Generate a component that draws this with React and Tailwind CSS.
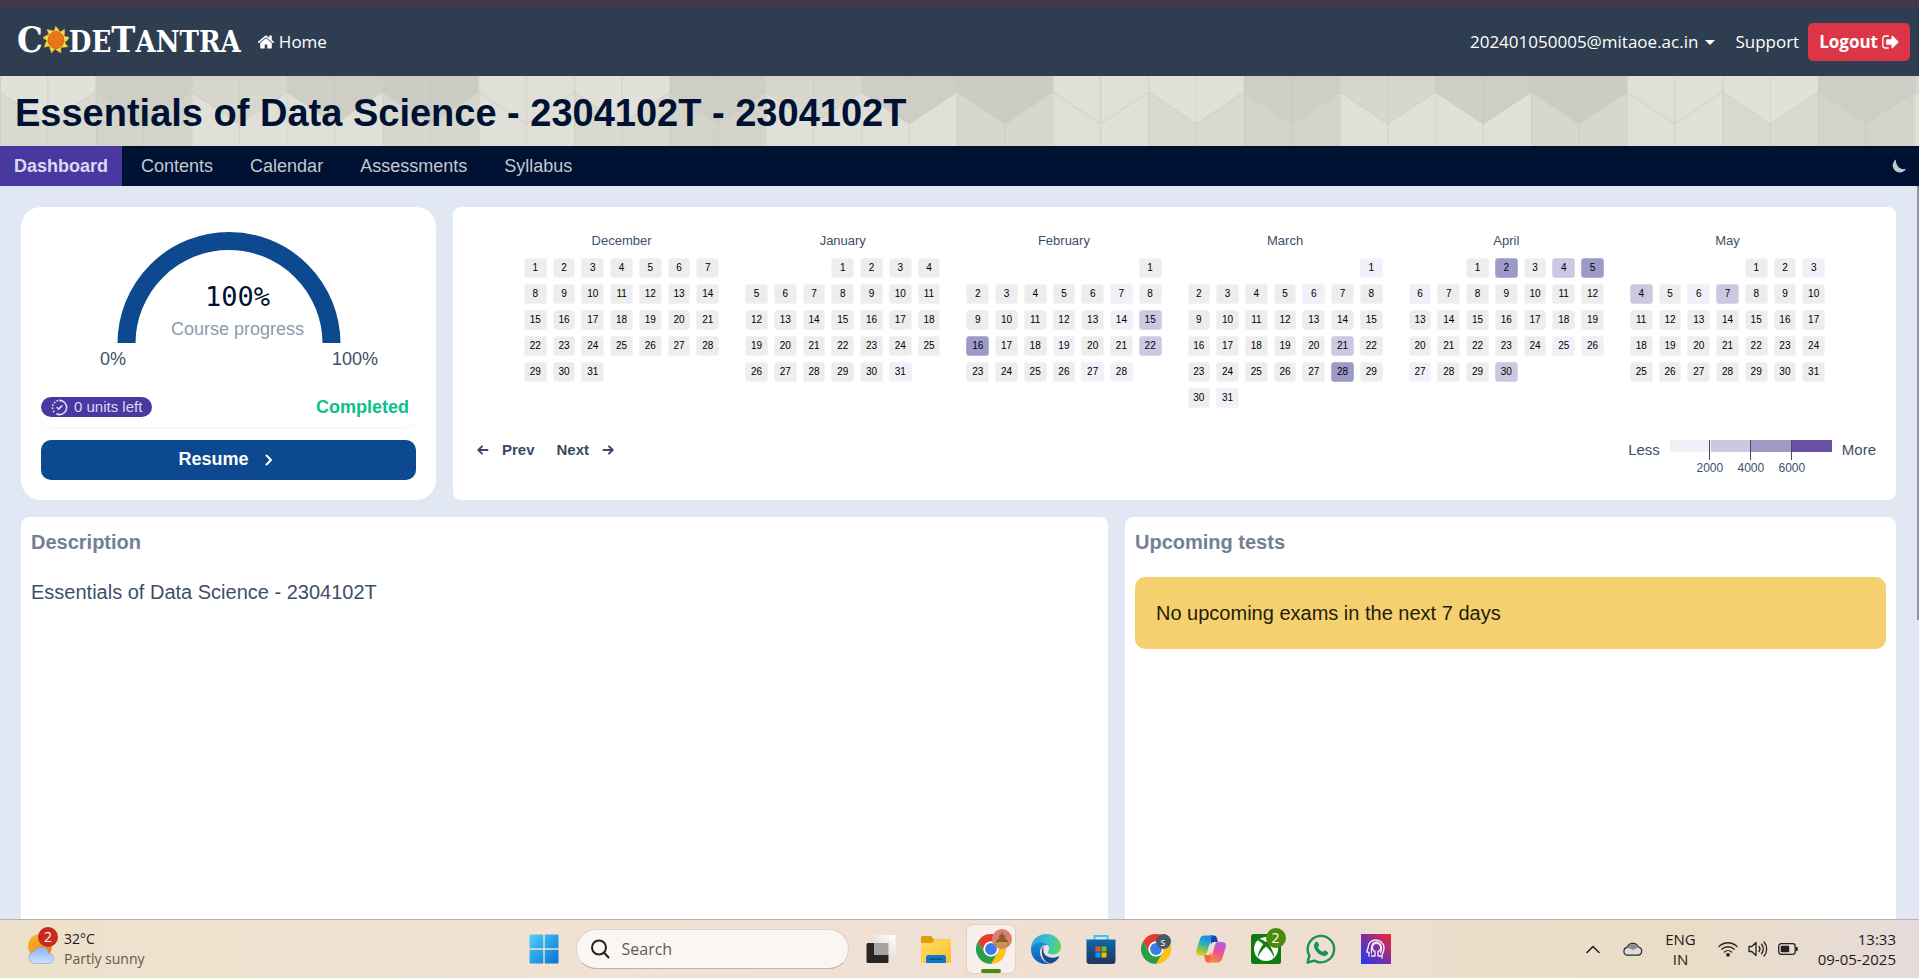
import React from "react";

const SANS = "font-['Liberation_Sans',sans-serif]";
const UI = "font-['Open_Sans',sans-serif]";

/* ---------- icons ---------- */

function HomeIcon() {
  return (
    <svg viewBox="0 0 1792 1792" className="size-[18px] fill-white" aria-hidden="true">
      <path d="M1472 992v480q0 26-19 45t-45 19h-384v-384H768v384H384q-26 0-45-19t-19-45V992q0-1 .5-3t.5-3l575-474 575 474q1 2 1 6zm223-69l-62 74q-8 9-21 11h-3q-13 0-21-7L896 424l-692 577q-12 8-24 7-13-2-21-11l-62-74q-8-10-7-23.5t11-21.5l719-599q32-26 76-26t76 26l244 204V288q0-14 9-23t23-9h192q14 0 23 9t9 23v408l219 182q10 8 11 21.5t-7 23.5z" />
    </svg>
  );
}

function LogoutIcon() {
  return (
    <svg viewBox="0 128 1600 1536" className="h-4 w-[17px] fill-white" aria-hidden="true">
      <path d="M640 1440q0 4 1 20t.5 26.5-3 23.5-10 19.5-20.5 6.500H288q-119 0-203.500-84.500T0 1248V544q0-119 84.500-203.500T288 256h320q13 0 22.500 9.500T640 288q0 4 1 20t.5 26.500-3 23.500-10 19.500T608 384H288q-66 0-113 47t-47 113v704q0 66 47 113t113 47h312l11.500 1 11.500 3 8 5.500 7 9 2 13.500zm928-544q0 26-19 45l-544 544q-19 19-45 19t-45-19-19-45v-288H448q-26 0-45-19t-19-45V704q0-26 19-45t45-19h448V352q0-26 19-45t45-19 45 19l544 544q19 19 19 45z" />
    </svg>
  );
}

function SunIcon() {
  const rays = Array.from({ length: 9 }, (_, i) => i * 40);
  return (
    <svg viewBox="0 0 26 28" className="h-7 w-[26px]" aria-hidden="true">
      {rays.map((a) => (
        <path key={a} d="M8.500 7Q12 5 12.500 0 Q16 3 17.500 7z" fill="#f3dc4c" stroke="#b98f1f" strokeWidth=".4" transform={`rotate(${a} 13 14)`} />
      ))}
      <ellipse cx="13" cy="14" rx="8.600" ry="9" fill="#f0d53f" />
      <ellipse cx="13" cy="14" rx="7.800" ry="8.600" fill="#e87817" stroke="#c9610f" strokeWidth=".8" />
    </svg>
  );
}

function UnitsIcon() {
  return (
    <svg viewBox="0 0 24 24" className="size-[19px]" fill="none" stroke="currentColor" strokeWidth="2" strokeLinecap="round" strokeLinejoin="round" aria-hidden="true">
      <path d="M9 12l2 2 4-4" />
      <path d="M12 3a9 9 0 0 1 0 18" />
      <path d="M8.560 20.310a9 9 0 0 0 3.440 .69" />
      <path d="M4.600 17.140v.01M3.100 13v.01M3.600 9v.01M5.800 5.600v.01M9 3.600v.01" strokeWidth="2.400" />
    </svg>
  );
}

function Arrow({ flip }) {
  return (
    <svg viewBox="0 0 12 12" className={flip ? "size-3 rotate-180" : "size-3"} fill="none" stroke="currentColor" strokeWidth="1.900" strokeLinecap="round" strokeLinejoin="round" aria-hidden="true">
      <path d="M1.500 6h9M7 2.300l3.700 3.700L7 9.700" />
    </svg>
  );
}

/* ---------- banner ---------- */

const COLS = [
  ["#e1e0d9", "#d9d9d0"],
  ["#cfcec6", "#d4d3ca"],
  ["#d8d7ce", "#e1e0d8"],
  ["#cfcec6", "#e1e0d8"],
  ["#cdccc4", "#d7d7cd"],
  ["#e0dfd8", "#e0dfd8"],
];

function BannerPattern() {
  return (
    <svg className="absolute inset-0 size-full" aria-hidden="true">
      <defs>
        <pattern id="folds" width="574.2" height="70" patternUnits="userSpaceOnUse">
          {COLS.map(([top, bottom], i) => (
            <g key={i} transform={`translate(${i * 95.7} 0)`}>
              <path d="M0 0H96V70H0z" fill={bottom} />
              <path d="M0 0H96V16L47.850 48 0 16z" fill={top} />
              <path d="M0 16L47.850 48 95.700 16" fill="none" stroke="#c9c8be" strokeOpacity=".6" />
              <path d="M.5 0V70M47.850 0V70" stroke="#c2c1b8" strokeOpacity=".5" />
            </g>
          ))}
        </pattern>
      </defs>
      <rect width="100%" height="100%" fill="url(#folds)" />
    </svg>
  );
}

/* ---------- heat map ---------- */

const LEVELS = {
  0: "border-[#f3f3f3] bg-[#ededed]",
  1: "border-[#f4f3f9] bg-[#f1eff7]",
  2: "border-[#d8d6e9] bg-[#cbc8e1]",
  3: "border-[#b3b0d4] bg-[#9e9ac8]",
};

const MONTHS = [
  { name: "December", start: 0, days: 31, marks: {} },
  { name: "January", start: 3, days: 31, marks: { 31: 1 } },
  { name: "February", start: 6, days: 28, marks: { 7: 1, 14: 1, 15: 2, 16: 3, 19: 1, 22: 2, 27: 1, 28: 1 } },
  { name: "March", start: 6, days: 31, marks: { 1: 1, 6: 1, 21: 2, 28: 3, 31: 1 } },
  { name: "April", start: 2, days: 30, marks: { 2: 3, 4: 2, 5: 3, 6: 1, 25: 1, 26: 1, 27: 1, 30: 2 } },
  { name: "May", start: 4, days: 31, marks: { 3: 1, 4: 2, 6: 1, 7: 2 } },
];

function Month({ name, start, days, marks }) {
  return (
    <section className="flex-1">
      <h3 className="text-center text-[13px] leading-5 text-[#3d4f68]">{name}</h3>
      <div className="mt-[7px] grid grid-cols-7 gap-[6px]">
        {Array.from({ length: start }, (_, i) => (
          <span key={`blank${i}`} />
        ))}
        {Array.from({ length: days }, (_, i) => (
          <span key={i} className={`flex h-5 items-center justify-center rounded-[3px] border text-[10px] leading-none text-black ${LEVELS[marks[i + 1] || 0]}`}>
            {i + 1}
          </span>
        ))}
      </div>
    </section>
  );
}

function Legend() {
  return (
    <div className="flex gap-[10px] text-[15px] leading-5 text-[#3d4f68]">
      <span>Less</span>
      <div>
        <div className="flex h-5 items-start">
          <span className="h-3 w-[41px] bg-[#f1eff7]" />
          <span className="h-3 w-10 bg-[#cbc8e1]" />
          <span className="h-3 w-[41px] bg-[#9e9ac8]" />
          <span className="h-3 w-10 bg-[#6a51a3]" />
        </div>
        <div className="-mt-5 flex justify-center text-xs leading-4">
          {["2000", "4000", "6000"].map((v) => (
            <span key={v} className="flex w-[41px] flex-col items-center">
              <span className="h-5 w-px bg-[#3d4f68]" />
              {v}
            </span>
          ))}
        </div>
      </div>
      <span>More</span>
    </div>
  );
}

/* ---------- cards ---------- */

function ProgressCard() {
  return (
    <section className="w-[415px] shrink-0 rounded-[20px] bg-white p-5 text-[18px]">
      <div className="flex h-[200px] flex-col rounded-[10px] pt-[5px] shadow-[0_1px_2px_rgba(0,0,0,0.05)]">
        <div className="relative">
          <svg viewBox="0 0 224 111" className="mx-auto h-[111px] w-56" aria-hidden="true">
            <path d="M9.500 111.500a102.500 102.500 0 0 1 205 0" fill="none" stroke="#0c498e" strokeWidth="18" />
          </svg>
          <div className="absolute inset-x-0 bottom-0 flex flex-col items-center pl-[18px]">
            <strong className="font-['DejaVu_Sans_Mono',monospace] text-[27px] leading-9 font-normal text-[#001233]">100%</strong>
            <span className="leading-7 text-[#8e9aac]">Course progress</span>
          </div>
        </div>
        <div className="flex justify-between pt-px pr-[38px] pl-[59px] leading-[30px] text-[#3d4f68]">
          <span>0%</span>
          <span>100%</span>
        </div>
        <div className="mt-auto mb-2 flex items-center justify-between pr-[7px]">
          <span className="flex h-5 items-center gap-[5px] rounded-full bg-[#4838a0] pr-[10px] pl-[9px] text-[15px] leading-5 text-[#dcd8f1]">
            <UnitsIcon />0 units left
          </span>
          <strong className="leading-6 text-[#0cc08a]">Completed</strong>
        </div>
      </div>
      <button className="mt-[13px] flex h-10 w-full items-center justify-center gap-4 rounded-[10px] bg-[#0c498e] pr-[6px] pb-[2px] font-bold text-white">
        Resume
        <svg viewBox="0 0 8 12" className="mt-[2px] h-3 w-2" fill="none" stroke="currentColor" strokeWidth="2" strokeLinecap="round" strokeLinejoin="round" aria-hidden="true">
          <path d="M1.500 1.500L6 6l-4.500 4.500" />
        </svg>
      </button>
    </section>
  );
}

function ActivityCard() {
  return (
    <section className="flex min-w-0 flex-1 flex-col rounded-lg bg-white pt-6 pb-6">
      <div className="flex gap-[26px] px-[71px]">
        {MONTHS.map((m) => (
          <Month key={m.name} {...m} />
        ))}
      </div>
      <div className="mt-auto flex items-start justify-between pr-5 pl-6">
        <div className="flex gap-[22px] text-[15px] leading-5 font-bold text-[#384a63]">
          <button className="flex items-center gap-[13px]"><Arrow flip />Prev</button>
          <button className="flex items-center gap-[13px]">Next<Arrow /></button>
        </div>
        <Legend />
      </div>
    </section>
  );
}

/* ---------- taskbar ---------- */

function Chrome() {
  return (
    <svg viewBox="0 0 48 48" className="size-[30px]" aria-hidden="true">
      <path d="M24 24L44.800 12A24 24 0 0 1 24 48z" fill="#fcc31e" />
      <path d="M24 12H44.800L34.400 30z" fill="#fcc31e" />
      <path d="M34.400 30L24 48 13.600 30z" fill="#fcc31e" />
      <path d="M3.200 12A24 24 0 0 1 44.800 12H24A12 12 0 0 0 13.600 30z" fill="#e33b2e" />
      <path d="M3.200 12L13.600 30A12 12 0 0 0 34.400 30L24 48A24 24 0 0 1 3.200 12z" fill="#2a9f48" />
      <circle cx="24" cy="24" r="12" fill="#fff" />
      <circle cx="24" cy="24" r="9.500" fill="#3a7cec" />
    </svg>
  );
}

function Windows() {
  return (
    <svg viewBox="0 0 30 30" className="size-[30px]" aria-hidden="true">
      <defs>
        <linearGradient id="win" x1="0" y1="0" x2="1" y2="1">
          <stop offset="0" stopColor="#4fd0fb" />
          <stop offset="1" stopColor="#0573d3" />
        </linearGradient>
      </defs>
      <path d="M1.500 .5H14.300V14.300H.5V1.500a1 1 0 0 1 1-1zM15.700 .5H28.500a1 1 0 0 1 1 1V14.300H15.700zM.5 15.700H14.300V29.500H1.500a1 1 0 0 1-1-1zM15.700 15.700H29.500V28.500a1 1 0 0 1-1 1H15.700z" fill="url(#win)" />
    </svg>
  );
}

function TaskView() {
  return (
    <svg viewBox="0 0 30 30" className="size-[30px]" aria-hidden="true">
      <defs>
        <linearGradient id="tv" x1="1" y1="0" x2="0" y2="1">
          <stop offset="0" stopColor="#fff" />
          <stop offset="1" stopColor="#d6d6d6" />
        </linearGradient>
      </defs>
      <rect x=".5" y="9" width="22" height="20" rx="1.500" fill="#262626" />
      <rect x="8" y="1" width="21.500" height="20" rx="1" fill="url(#tv)" />
      <path d="M8 9H22.500V21H9a1 1 0 0 1-1-1z" fill="#a5a4a2" />
    </svg>
  );
}

function Folder() {
  return (
    <svg viewBox="0 0 30 30" className="size-[30px]" aria-hidden="true">
      <defs>
        <linearGradient id="fo" x1="0" y1="0" x2="1" y2="1">
          <stop offset="0" stopColor="#ffdc66" />
          <stop offset="1" stopColor="#fbbf26" />
        </linearGradient>
      </defs>
      <path d="M0 3.500A1.500 1.500 0 0 1 1.500 2H10l3 3.500H28.500a1 1 0 0 1 1 1V12H0z" fill="#df9c0b" />
      <path d="M0 9H11l3-3.500H28.500A1.500 1.500 0 0 1 30 7V27.500A1.500 1.500 0 0 1 28.500 29H1.500A1.500 1.500 0 0 1 0 27.500z" fill="url(#fo)" />
      <path d="M5 29V23.500A2.500 2.500 0 0 1 7.500 21H22.500A2.500 2.500 0 0 1 25 23.500V29z" fill="#0d78c9" />
      <path d="M9 25.200H21" stroke="#054a86" strokeWidth="1.400" strokeLinecap="round" />
    </svg>
  );
}

function Edge() {
  return (
    <svg viewBox="0 0 30 30" className="size-[30px]" aria-hidden="true">
      <defs>
        <linearGradient id="ed1" x1="0" y1=".3" x2="1" y2=".4">
          <stop offset="0" stopColor="#2aa5e6" />
          <stop offset=".6" stopColor="#35c4cd" />
          <stop offset="1" stopColor="#60d957" />
        </linearGradient>
        <linearGradient id="ed2" x1="0" y1="0" x2="0" y2="1">
          <stop offset="0" stopColor="#1b8fdc" />
          <stop offset="1" stopColor="#0d5ba8" />
        </linearGradient>
      </defs>
      <path d="M.2 13C1 5.500 7.500 0 15 0c9 0 15 6.500 15 12.500 0 5-3.800 8-8 8-3.500 0-5.200-1.200-5.200-2.200 0-.9 1.400-1.400 1.400-3.800C18.200 11 14.500 8 9.500 8 5 8 1.500 10 .2 13z" fill="url(#ed1)" />
      <path d="M.2 13C1.500 10 5 8 9.500 8c3.500 0 6 1.500 7.500 3.300-3.500-1.300-8 1.700-8 6.700 0 6 4.500 11 9.500 11.500C9 32-1.500 24.500.2 13z" fill="url(#ed2)" />
      <path d="M12.500 12.500C9.500 15 9.800 26.500 18.500 29.500c4 0 8-3.500 9.500-6.300.3-.8-.3-1-.9-.7-6 3-13.500.5-14.600-4.700-.4-2 0-3.800 0-5.300z" fill="#124c8f" />
    </svg>
  );
}

function Store() {
  return (
    <svg viewBox="0 0 30 30" className="size-[30px]" aria-hidden="true">
      <defs>
        <linearGradient id="st" x1="0" y1="0" x2="0" y2="1">
          <stop offset="0" stopColor="#0d67ae" />
          <stop offset="1" stopColor="#233457" />
        </linearGradient>
      </defs>
      <path d="M8.500 7V2H21.500V7" fill="none" stroke="#37c5f2" strokeWidth="2" />
      <path d="M.5 5.500H29.500V27a3 3 0 0 1-3 3H3.500a3 3 0 0 1-3-3z" fill="url(#st)" />
      <path d="M9.500 12.500h5v5h-5z" fill="#f25022" />
      <path d="M15.500 12.500h5v5h-5z" fill="#7fba00" />
      <path d="M9.500 18.500h5v5h-5z" fill="#00a4ef" />
      <path d="M15.500 18.500h5v5h-5z" fill="#ffb900" />
    </svg>
  );
}

function Copilot() {
  return (
    <svg viewBox="0 0 30 30" className="size-[30px]" aria-hidden="true">
      <defs>
        <linearGradient id="co1" x1=".5" y1="0" x2=".2" y2="1">
          <stop offset="0" stopColor="#1689e8" />
          <stop offset=".4" stopColor="#25b0c4" />
          <stop offset=".7" stopColor="#8cc641" />
          <stop offset="1" stopColor="#f2c51b" />
        </linearGradient>
        <linearGradient id="co2" x1=".7" y1="0" x2=".3" y2="1">
          <stop offset="0" stopColor="#b05bea" />
          <stop offset=".5" stopColor="#f0508f" />
          <stop offset="1" stopColor="#fb8a3c" />
        </linearGradient>
      </defs>
      <path d="M14 1.500h4c2 0 2.600 1.500 3.200 3.500L22 8h-4c-2 0-2.500 1-3.200 3z" fill="#1147b5" />
      <path d="M16 28.500h-4c-2 0-2.600-1.500-3.200-3.500L8 21h4c2 0 2.500-1 3.200-3z" fill="#f56a3c" />
      <path d="M8.500 1.500H18c-1.500 0-2.300 1.500-2.800 3L11 18.500c-.6 1.800-1.500 3-3.500 3H4c-3 0-4.500-2-3.700-5L4 4.700c.7-2 2.200-3.200 4.500-3.200z" fill="url(#co1)" />
      <path d="M21.500 28.500H12c1.500 0 2.300-1.500 2.800-3L19 11c.6-1.800 1.500-3 3.500-3H26c3 0 4.500 2 3.700 5L26 25.300c-.7 2-2.200 3.200-4.500 3.200z" fill="url(#co2)" />
    </svg>
  );
}

function Xbox() {
  return (
    <svg viewBox="0 0 30 30" className="size-[30px]" aria-hidden="true">
      <rect width="30" height="30" rx="2.500" fill="#107c10" />
      <circle cx="15" cy="15" r="12" fill="#fff" />
      <path d="M15 12.500C11 16 7.500 21 6.800 24c-.3-3.500 2.200-9.300 5.400-13.700C10.500 8.600 8.500 7 6.800 6.500L8 5c2.500 0 5 1.500 7 3.300C17 6.500 19.500 5 22 5l1.200 1.500c-1.700.5-3.700 2.100-5.400 3.800 3.200 4.400 5.700 10.200 5.400 13.700-.7-3-4.200-8-8.200-11.500z" fill="#107c10" />
    </svg>
  );
}

function WhatsApp() {
  return (
    <svg viewBox="0 0 30 30" className="size-[30px]" aria-hidden="true">
      <path d="M1.500 28.500L3.400 21.600A13.200 13.200 0 1 1 8.400 26.600z" fill="none" stroke="#1b8f5a" strokeWidth="2.400" strokeLinejoin="round" />
      <path d="M10.200 7.800c.7-.3 1.400-.2 1.700.5l1.100 2.600c.2.600-.1 1.100-1.200 2.400 1 2 2.700 3.700 5.100 4.800 1.200-1.500 1.500-1.800 2.200-1.500l2.600 1.300c.5.300.5.800.3 1.500-.5 1.700-2.300 2.700-4.100 2.500-5-.8-9.300-5-9.900-9.600-.2-1.800.8-3.700 2.200-4.500z" fill="#1b8f5a" />
    </svg>
  );
}

function HeadApp() {
  return (
    <svg viewBox="0 0 30 30" className="size-[30px]" aria-hidden="true">
      <defs>
        <linearGradient id="hd" x1="0" y1="1" x2="1" y2="0">
          <stop offset="0" stopColor="#1d3df5" />
          <stop offset=".5" stopColor="#7a2f9f" />
          <stop offset="1" stopColor="#fb2430" />
        </linearGradient>
      </defs>
      <rect width="30" height="30" fill="url(#hd)" />
      <g fill="none" stroke="#f2e6fa" strokeWidth="1.400" strokeLinecap="round" strokeLinejoin="round">
        <path d="M8 22V18.500L5.800 18 7 14C7 9 10.500 6 15 6s8 3.500 8 8c0 3-1 5-2 6.500V24" />
        <path d="M10.500 22H14V17.500A4.200 4.200 0 1 1 17 17.500V22H20.500" />
        <path d="M10.500 19V14a4.700 5.700 0 0 1 10 0c0 2-.3 3.200-1 4.500" />
      </g>
    </svg>
  );
}

function AppButton({ label, active, badge, children }) {
  return (
    <button aria-label={label} className={`relative flex size-12 items-center justify-center rounded-md ${active ? "bg-[#f7efea] shadow-[0_0_1px_1px_rgba(120,90,80,0.12)]" : ""}`}>
      {children}
      {badge}
      {active && <span className="absolute bottom-0 h-1 w-5 rounded-full bg-[#4b8a0a]" />}
    </button>
  );
}

function Taskbar() {
  return (
    <footer className={`grid h-[59px] shrink-0 grid-cols-[1fr_auto_1fr] items-center border-t border-[#b8b0aa] bg-[linear-gradient(90deg,#ede1cb,#f1e2d4_30%,#efdfd3_60%,#ebdcc6_88%,#e6dbda)] ${UI}`}>
      <div className="flex items-center gap-2 pl-7">
        <div className="relative">
          <svg viewBox="0 0 28 30" className="h-[30px] w-7" aria-hidden="true">
            <defs>
              <linearGradient id="sun" x1="0" y1="0" x2="1" y2="1">
                <stop offset="0" stopColor="#f6bd27" />
                <stop offset="1" stopColor="#f0711a" />
              </linearGradient>
              <linearGradient id="cloud" x1="0" y1="0" x2="0" y2="1">
                <stop offset="0" stopColor="#8db4f5" />
                <stop offset="1" stopColor="#cfe2ff" />
              </linearGradient>
            </defs>
            <circle cx="12" cy="12" r="12" fill="url(#sun)" />
            <path d="M7 29.500a6 6 0 0 1-.5-12A7.500 7.500 0 0 1 20.500 19 5.400 5.400 0 0 1 22 29.500z" fill="url(#cloud)" stroke="#7ba3e6" strokeWidth=".6" />
          </svg>
          <span className="absolute -top-[7px] -right-[2px] flex size-5 items-center justify-center rounded-full bg-[#c42b1c] text-sm leading-none text-white">2</span>
        </div>
        <div className="text-[14px] leading-5">
          <div className="text-[#1d1a18]">32°C</div>
          <div className="text-[#5f5952]">Partly sunny</div>
        </div>
      </div>
      <div className="flex items-center gap-[7px]">
        <AppButton label="Start"><Windows /></AppButton>
        <label className="mx-px flex h-10 w-[273px] items-center gap-3 rounded-full border border-[#dfd3cc] border-b-[#bcb2ac] bg-[#faf6f2] pl-[13px]">
          <svg viewBox="0 0 20 20" className="size-5 shrink-0" fill="none" stroke="#222" strokeWidth="2" strokeLinecap="round" aria-hidden="true">
            <circle cx="9" cy="8.500" r="7" />
            <path d="M14 13.500L18.500 18.500" />
          </svg>
          <input aria-label="Search" placeholder="Search" className="w-full min-w-0 bg-transparent text-base outline-none placeholder:text-[#5f5a57]" />
        </label>
        <AppButton label="Task view"><TaskView /></AppButton>
        <AppButton label="File Explorer"><Folder /></AppButton>
        <AppButton
          label="Chrome"
          active
          badge={
            <svg viewBox="0 0 20 20" className="absolute top-1 right-[3px] size-5" aria-hidden="true">
              <circle cx="10" cy="10" r="10" fill="#dd7d70" />
              <path d="M10 3l1 2.500 2.500 1.500-1 2 3 2.500 1 4.500H3.500l1-4.500 3-2.500-1-2L9 5.500z" fill="#8f5a2c" />
              <path d="M3 14.500C6 12.500 8 13 10 13s4-.5 7 1.500a9.500 9.500 0 0 1-14 0z" fill="#c39a4c" />
            </svg>
          }
        >
          <Chrome />
        </AppButton>
        <AppButton label="Edge"><Edge /></AppButton>
        <AppButton label="Microsoft Store"><Store /></AppButton>
        <AppButton label="Chrome, second profile" badge={<span className="absolute top-[9px] right-[9px] flex size-[15px] items-center justify-center rounded-full bg-[#455a64] text-[10px] leading-none text-white">s</span>}>
          <Chrome />
        </AppButton>
        <AppButton label="Copilot"><Copilot /></AppButton>
        <AppButton label="Xbox" badge={<span className="absolute top-[3px] right-1 flex size-5 items-center justify-center rounded-full bg-[#4b8a0a] text-sm leading-none text-white">2</span>}>
          <Xbox />
        </AppButton>
        <AppButton label="WhatsApp"><WhatsApp /></AppButton>
        <AppButton label="Assistant"><HeadApp /></AppButton>
      </div>
      <div className="flex items-center justify-end pr-[23px] text-[15px] leading-5 text-[#1d1a18]">
        <svg viewBox="0 0 14 9" className="h-[9px] w-[14px]" fill="none" stroke="#222" strokeWidth="1.600" strokeLinecap="round" strokeLinejoin="round" aria-hidden="true">
          <path d="M1 7.500L7 1.500l6 6" />
        </svg>
        <svg viewBox="0 0 20 14" className="ml-[23px] h-[14px] w-5" aria-hidden="true">
          <path d="M4.500 13.200a4 4 0 0 1-.4-7.900A6 6 0 0 1 15.300 5a4.200 4.200 0 0 1 .2 8.200z" fill="#dcdcdc" stroke="#2a2a2a" strokeWidth="1.200" />
          <path d="M4.500 5.500A5.700 5.700 0 0 1 15 5.500L10 8z" fill="#8d8d8d" />
        </svg>
        <div className="ml-[22px] text-center">ENG<br />IN</div>
        <svg viewBox="0 0 20 16" className="ml-[22px] h-4 w-5" fill="none" stroke="#222" strokeWidth="1.300" strokeLinecap="round" aria-hidden="true">
          <path d="M1 5.500a12.700 12.700 0 0 1 18 0M3.800 8.300a8.800 8.800 0 0 1 12.400 0M6.500 11a5 5 0 0 1 7 0" />
          <circle cx="10" cy="13.800" r="1.200" fill="#222" />
        </svg>
        <svg viewBox="0 0 20 18" className="ml-[10px] h-[18px] w-5" fill="none" stroke="#222" strokeWidth="1.300" strokeLinecap="round" strokeLinejoin="round" aria-hidden="true">
          <path d="M1 6.500h2.800L8 2.500v13L3.800 11.500H1z" />
          <path d="M11 6.500a4 4 0 0 1 0 5M13.500 4.300a7 7 0 0 1 0 9.400M16 2a10.500 10.500 0 0 1 0 14" />
        </svg>
        <svg viewBox="0 0 20 12" className="ml-[10px] h-3 w-5" aria-hidden="true">
          <rect x=".7" y=".7" width="16.500" height="10.600" rx="2.500" fill="none" stroke="#222" strokeWidth="1.300" />
          <rect x="2.700" y="2.700" width="8.500" height="6.600" rx="1" fill="#222" />
          <path d="M18 4h.8a1 1 0 0 1 1 1v2a1 1 0 0 1-1 1H18z" fill="#222" />
        </svg>
        <div className="ml-5 text-right">13:33<br />09-05-2025</div>
      </div>
    </footer>
  );
}

/* ---------- page ---------- */

export default function App() {
  return (
    <div className={`flex h-screen flex-col overflow-hidden bg-[#e1e7f3] ${SANS}`}>
      <header className={`flex h-[76px] shrink-0 items-center border-t-8 border-[#42374b] bg-[#2e3e50] pr-[9px] pl-[17px] text-[17px] text-white ${UI}`}>
        <a href="#home" aria-label="CodeTantra" className="flex items-baseline pb-1 font-['DejaVu_Serif_Condensed','DejaVu_Serif',serif] text-[29px] leading-9 font-bold">
          <span className="text-[36px]">C</span>
          <span className="self-center"><SunIcon /></span>
          DE
          <span className="text-[36px]">T</span>
          ANTRA
        </a>
        <a href="#home" className="ml-4 flex items-center gap-1"><HomeIcon />Home</a>
        <div className="ml-auto flex items-center">
          <button className="flex items-center gap-[7px]">
            202401050005@mitaoe.ac.in
            <span className="border-x-[5px] border-t-[5px] border-x-transparent border-t-white" />
          </button>
          <a href="#support" className="ml-5">Support</a>
          <button className="ml-[9px] flex h-[38px] items-center gap-1 rounded-[5px] bg-[#dc3545] px-[11px] font-bold">
            Logout<LogoutIcon />
          </button>
        </div>
      </header>
      <div className="relative flex h-[70px] shrink-0 items-center px-[15px] pt-1">
        <BannerPattern />
        <h1 className="relative text-[38px] leading-[48px] font-bold whitespace-nowrap text-[#001233]">
          Essentials of Data Science - 2304102T - 2304102T
        </h1>
      </div>
      <nav className="flex h-10 shrink-0 items-center gap-px bg-[#001233] pr-3 text-[18px] leading-10 text-[#c3c7cf]">
        <a href="#dashboard" className="h-10 bg-[#4838a0] px-[14px] font-bold text-[#dcd8f1]">Dashboard</a>
        <a href="#contents" className="px-[18px]">Contents</a>
        <a href="#calendar" className="px-[18px]">Calendar</a>
        <a href="#assessments" className="px-[18px]">Assessments</a>
        <a href="#syllabus" className="px-[18px]">Syllabus</a>
        <button aria-label="Dark mode" className="ml-auto">
          <svg viewBox="0 0 16 16" className="size-4" fill="#c3c7cf" aria-hidden="true">
            <path d="M5.200 1.200A7.200 7.200 0 1 0 15.200 10.800 8 8 0 0 1 5.200 1.200z" />
          </svg>
        </button>
      </nav>
      <main className="relative flex min-h-0 flex-1 flex-col gap-[17px] overflow-hidden pt-[21px] pr-[23px] pl-[21px]">
        <div className="flex h-[293px] shrink-0 gap-[17px]">
          <ProgressCard />
          <ActivityCard />
        </div>
        <div className="grid min-h-0 flex-1 grid-cols-[1087fr_771fr] gap-[17px] text-[20px]">
          <section className="rounded-t-lg bg-white p-[10px]">
            <h2 className="leading-[30px] font-bold text-[#718096]">Description</h2>
            <p className="mt-5 leading-[30px] text-[#3d4f68]">Essentials of Data Science - 2304102T</p>
          </section>
          <section className="rounded-t-lg bg-white p-[10px]">
            <h2 className="leading-[30px] font-bold text-[#718096]">Upcoming tests</h2>
            <div role="status" className="mt-5 rounded-[10px] bg-[#f4d06f] px-[21px] py-5 leading-8 text-[#241d0a]">
              No upcoming exams in the next 7 days
            </div>
          </section>
        </div>
        <span className="absolute top-0 right-0 h-[434px] w-[2px] bg-[#8d95a5]" />
      </main>
      <Taskbar />
    </div>
  );
}
